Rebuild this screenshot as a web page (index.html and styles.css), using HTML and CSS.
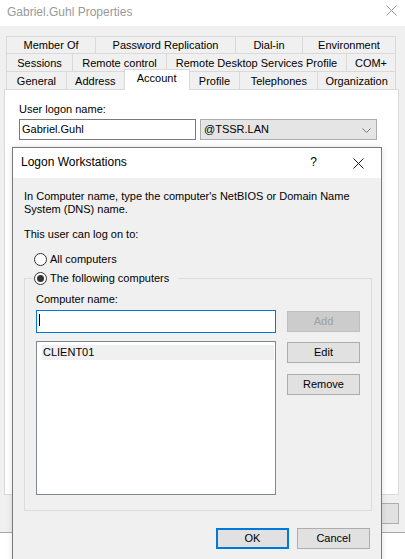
FILE: index.html
```html
<!DOCTYPE html>
<html lang="en">
<head>
<meta charset="utf-8">
<title>Gabriel.Guhl Properties</title>
<link rel="stylesheet" href="styles.css">
</head>
<body>
<div class="props">
  <div class="titlebar">
    <span class="title">Gabriel.Guhl Properties</span>
    <svg class="close-x" width="11" height="11" viewBox="0 0 11 11"><path d="M0.5 0.5 L10.5 10.5 M10.5 0.5 L0.5 10.5" stroke="#9a9a9a" stroke-width="1" fill="none"/></svg>
  </div>
  <div class="tabs">
    <div class="tabrow row1">
      <div class="tab t-member">Member Of</div>
      <div class="tab t-password">Password Replication</div>
      <div class="tab t-dialin">Dial-in</div>
      <div class="tab t-env last">Environment</div>
    </div>
    <div class="tabrow row2">
      <div class="tab t-sessions">Sessions</div>
      <div class="tab t-remote">Remote control</div>
      <div class="tab t-rds">Remote Desktop Services Profile</div>
      <div class="tab t-com last">COM+</div>
    </div>
    <div class="tabrow row3">
      <div class="tab t-general">General</div>
      <div class="tab t-address">Address</div>
      <div class="tab t-account selected">Account</div>
      <div class="tab t-profile after-selected">Profile</div>
      <div class="tab t-phones">Telephones</div>
      <div class="tab t-org last">Organization</div>
    </div>
  </div>
  <div class="panel">
    <div class="label">User logon name:</div>
    <div class="logon-row">
      <div class="textbox">Gabriel.Guhl</div>
      <div class="combo">
        <span>@TSSR.LAN</span>
        <svg class="chev" width="9" height="5" viewBox="0 0 9 5"><polyline points="0.5,0.5 4.5,4.5 8.5,0.5" stroke="#7a7a7a" stroke-width="1" fill="none"/></svg>
      </div>
    </div>
  </div>
  <div class="props-footer">
    <div class="btn apply">Apply</div>
  </div>
</div>

<div class="dialog">
  <div class="dlg-titlebar">
    <span class="dlg-title">Logon Workstations</span>
    <span class="dlg-help">?</span>
    <svg class="dlg-x" width="11" height="11" viewBox="0 0 11 11"><path d="M0.5 0.5 L10.5 10.5 M10.5 0.5 L0.5 10.5" stroke="#1a1a1a" stroke-width="1" fill="none"/></svg>
  </div>
  <div class="dlg-body">
    <p class="intro">In Computer name, type the computer's NetBIOS or Domain Name<br>System (DNS) name.</p>
    <p class="logon-to">This user can log on to:</p>
    <div class="radio-row all">
      <span class="radio"></span>
      <span>All computers</span>
    </div>
    <div class="group">
      <div class="radio-row legend">
        <span class="radio checked"></span>
        <span>The following computers</span>
      </div>
      <div class="label cn-label">Computer name:</div>
      <div class="cn-row">
        <div class="cn-input"><span class="caret"></span></div>
        <div class="btn disabled">Add</div>
      </div>
      <div class="list-row">
        <div class="listbox">
          <div class="list-item">CLIENT01</div>
        </div>
        <div class="list-buttons">
          <div class="btn">Edit</div>
          <div class="btn">Remove</div>
        </div>
      </div>
    </div>
    <div class="dlg-footer">
      <div class="btn default">OK</div>
      <div class="btn">Cancel</div>
    </div>
  </div>
</div>
</body>
</html>
```
FILE: styles.css
```css
* { box-sizing: border-box; }
html, body { margin: 0; padding: 0; }
body {
  width: 405px;
  height: 559px;
  overflow: hidden;
  position: relative;
  background: #ffffff;
  font-family: "Liberation Sans", Arial, sans-serif;
  font-size: 11px;
  line-height: 13px;
  color: #000;
}
p { margin: 0; }

/* ---------- Properties window ---------- */
.props {
  height: 533px;
  background: #f0f0f0;
  border-bottom: 1px solid #a8a8a8;
  display: flex;
  flex-direction: column;
}
.titlebar {
  height: 26px;
  flex: none;
  background: #ffffff;
  display: flex;
  justify-content: space-between;
  align-items: flex-start;
  padding: 0 8px 0 7px;
}
.title {
  font-size: 12px;
  line-height: 16px;
  padding-top: 4px;
  color: #999999;
}
.close-x { margin-top: 5px; }

.tabs {
  margin: 10px 0 0 6px;
  width: 390px;
  flex: none;
}
.tabrow {
  display: flex;
  height: 18px;
  align-items: flex-end;
}
.row1 { height: 17px; }
.row3 { position: relative; z-index: 1; }
.tab {
  height: 100%;
  border-left: 1px solid #d9d9d9;
  border-top: 1px solid #d9d9d9;
  background: #f0f0f0;
  display: flex;
  align-items: center;
  justify-content: center;
  white-space: nowrap;
  padding-top: 1px;
}
.tab.last { border-right: 1px solid #d9d9d9; }
.tab.selected {
  height: 21px;
  margin-bottom: -1px;
  background: #ffffff;
  border-right: 1px solid #d9d9d9;
  padding-top: 0;
  padding-bottom: 4px;
}
.tab.after-selected { margin-left: -1px; }

.t-member { width: 89px; }
.t-password { width: 140px; }
.t-dialin { width: 67px; }
.t-env { width: 94px; }
.t-sessions { width: 66px; }
.t-remote { width: 94px; }
.t-rds { width: 180px; }
.t-com { width: 50px; }
.t-general { width: 60px; }
.t-address { width: 58px; }
.t-account { width: 66px; }
.t-profile { width: 51px; }
.t-phones { width: 78px; }
.t-org { width: 79px; }

.panel {
  margin-left: 4px;
  width: 395px;
  height: 406px;
  flex: none;
  background: #ffffff;
  border: 1px solid #d9d9d9;
  padding: 13px 0 0 14px;
}
.label { line-height: 13px; }
.logon-row {
  display: flex;
  gap: 4px;
  margin-top: 3px;
}
.textbox {
  width: 177px;
  height: 21px;
  border: 1px solid #7a7a7a;
  background: #fff;
  padding: 3px 0 0 2px;
}
.combo {
  width: 177px;
  height: 21px;
  border: 1px solid #adadad;
  background: #e5e5e5;
  display: flex;
  align-items: center;
  justify-content: space-between;
  padding: 0 5px 0 3px;
}
.chev { margin-top: 1px; }

.props-footer {
  display: flex;
  justify-content: flex-end;
  padding: 8px 6px 0 0;
}

/* ---------- Buttons ---------- */
.btn {
  width: 73px;
  height: 21px;
  background: #e1e1e1;
  border: 1px solid #adadad;
  display: flex;
  align-items: center;
  justify-content: center;
  flex: none;
}
.btn.apply { width: 75px; }
.btn.disabled {
  background: #cccccc;
  border-color: #bfbfbf;
  color: #a0a0a0;
}
.btn.default { border: 2px solid #0078d7; }

/* ---------- Logon Workstations dialog ---------- */
.dialog {
  position: absolute;
  left: 12px;
  top: 147px;
  width: 370px;
  height: 430px;
  border: 1px solid #7a7a7a;
  background: #f0f0f0;
  box-shadow: 0 0 6px rgba(0, 0, 0, 0.12);
}
.dlg-titlebar {
  height: 30px;
  background: #ffffff;
  display: flex;
  align-items: center;
  padding: 0 0 0 8px;
}
.dlg-title {
  font-size: 12px;
  flex: 1;
  padding-bottom: 2px;
}
.dlg-help {
  font-size: 12px;
  padding-bottom: 2px;
  margin-right: 36px;
}
.dlg-x { margin-right: 17px; margin-top: 1px; }

.dlg-body { padding: 12px 11px 0 11px; }
.logon-to { margin-top: 12px; }
.radio-row {
  display: flex;
  align-items: center;
  gap: 3px;
  height: 13px;
}
.radio-row.all { margin: 12px 0 0 10px; }
.radio {
  width: 13px;
  height: 13px;
  border-radius: 50%;
  border: 1px solid #333333;
  background: #ffffff;
  display: flex;
  align-items: center;
  justify-content: center;
}
.radio.checked::after {
  content: "";
  width: 7px;
  height: 7px;
  border-radius: 50%;
  background: #333333;
}

.group {
  margin-top: 12px;
  width: 348px;
  border: 1px solid #dcdcdc;
  padding: 0 10px 15px 11px;
}
.radio-row.legend {
  width: fit-content;
  margin: -7px 0 0 -2px;
  padding: 0 9px 0 0;
  background: #f0f0f0;
}
.cn-label { margin-top: 8px; }
.cn-row {
  display: flex;
  align-items: center;
  gap: 11px;
  margin-top: 4px;
}
.cn-input {
  width: 240px;
  height: 23px;
  border: 1px solid #0078d7;
  background: #fff;
  padding: 3px 0 0 2px;
}
.caret {
  display: block;
  width: 1px;
  height: 12px;
  background: #000;
}
.list-row {
  display: flex;
  gap: 11px;
  margin-top: 8px;
}
.listbox {
  width: 240px;
  height: 154px;
  border: 1px solid #828790;
  background: #ffffff;
  padding: 3px 1px 0 5px;
}
.list-item {
  height: 15px;
  background: #f0f0f0;
  padding: 1px 0 0 1px;
}
.list-buttons {
  display: flex;
  flex-direction: column;
  gap: 11px;
  padding-top: 1px;
}
.dlg-footer {
  display: flex;
  justify-content: flex-end;
  gap: 8px;
  margin-top: 17px;
}
```
